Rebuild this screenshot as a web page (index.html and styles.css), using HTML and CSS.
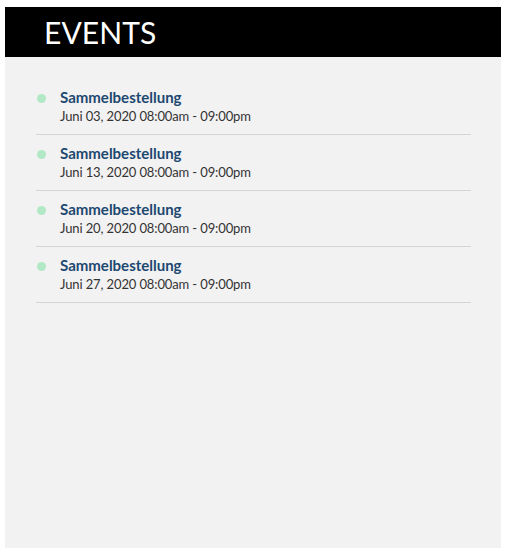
FILE: index.html
```html
<!DOCTYPE html>
<html lang="de">
<head>
<meta charset="utf-8">
<title>Events</title>
<link rel="stylesheet" href="styles.css">
</head>
<body>
<section class="panel">
  <header class="panel-head"><h1>EVENTS</h1></header>
  <ul class="events">
    <li class="event"><span class="dot"></span><div class="info"><a class="title">Sammelbestellung</a><span class="date">Juni 03, 2020 08:00am - 09:00pm</span></div></li>
    <li class="event"><span class="dot"></span><div class="info"><a class="title">Sammelbestellung</a><span class="date">Juni 13, 2020 08:00am - 09:00pm</span></div></li>
    <li class="event"><span class="dot"></span><div class="info"><a class="title">Sammelbestellung</a><span class="date">Juni 20, 2020 08:00am - 09:00pm</span></div></li>
    <li class="event"><span class="dot"></span><div class="info"><a class="title">Sammelbestellung</a><span class="date">Juni 27, 2020 08:00am - 09:00pm</span></div></li>
  </ul>
</section>
</body>
</html>
```
FILE: styles.css
```css
html, body { margin: 0; padding: 0; background: #ffffff; }
body { padding: 7px 9px 10px 5px; font-family: Lato, "Open Sans", sans-serif; }
.panel {
  background: #f2f2f2;
  height: 541px;
  width: 496px;
  box-sizing: border-box;
}
.panel-head {
  background: #000;
  height: 50px;
  padding-left: 39px;
  display: flex;
  align-items: center;
}
.panel-head h1 {
  margin: 0;
  color: #fff;
  font-weight: 400;
  font-size: 30px;
  line-height: 1;
  letter-spacing: 0.1px;
}
.events {
  list-style: none;
  margin: 0 0 0 31px;
  padding: 22px 0 0 0;
  width: 435px;
}
.event {
  display: flex;
  gap: 14px;
  padding: 10px 0 9px 1px;
  border-bottom: 1px solid #d4d4d4;
}
.dot {
  flex: none;
  width: 9px;
  height: 9px;
  border-radius: 50%;
  background: #b2e8c6;
  margin-top: 5px;
}
.info { display: flex; flex-direction: column; }
.title {
  font-weight: 700;
  font-size: 15px;
  line-height: 16px;
  color: #1d4870;
}
.date {
  margin-top: 3px;
  font-size: 13px;
  line-height: 17px;
  letter-spacing: -0.12px;
  color: #333;
}
```
